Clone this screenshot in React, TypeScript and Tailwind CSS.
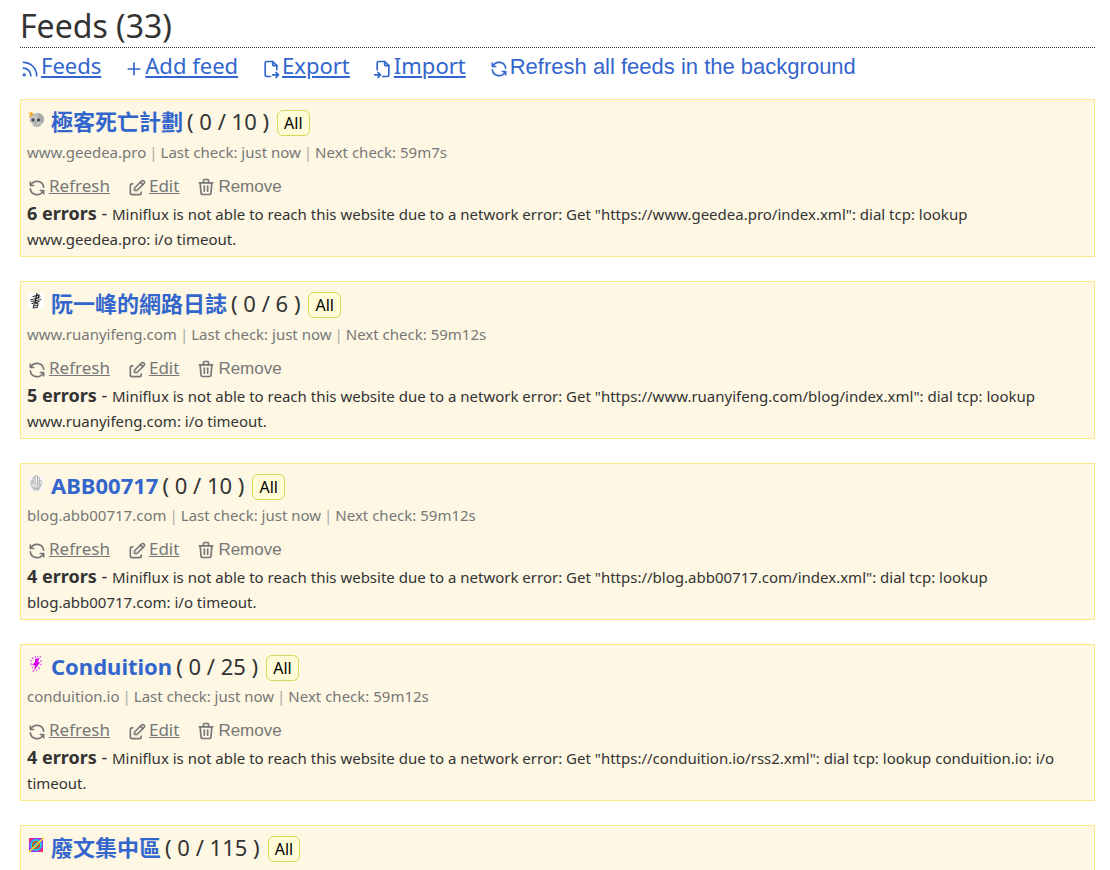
import type { ReactNode } from "react";
import {
  TbEdit,
  TbFileExport,
  TbFileImport,
  TbPlus,
  TbRefresh,
  TbRss,
  TbTrash,
} from "react-icons/tb";

interface Feed {
  title: string;
  unread: number;
  total: number;
  icon: ReactNode;
  check?: {
    host: string;
    next: string;
    errors: number;
    url: string;
  };
}

const SkullIcon = () => (
  <svg className="w-4 h-4" viewBox="0 0 16 16">
    <path
      d="M8.500 2C13 2 16 4.500 16 8.500c0 2.500-1.200 4-2.500 4.500l-.5 2-2.500 1H7.500L5 14.500 4.500 12.500C2.500 12 1.500 10.500 1.500 8.500 1.500 5 4 2 8.500 2z"
      fill="#c2c3c3"
    />
    <path d="M9.500 2C13.500 2 16 5 16 8.500c0 2.500-1.500 4-2.500 4.500l-3-4z" fill="#aaacad" />
    <circle cx="5" cy="9" r="1.700" fill="#4a4d52" />
    <circle cx="10.500" cy="9" r="1.700" fill="#4a4d52" />
    <path d="M7.700 10.500l-.8 1.500h1.500z" fill="#55585c" />
    <path d="M6 13v2M8.500 13.500v2M11 13v2" stroke="#808386" strokeWidth=".6" />
    <path d="M0 1l2 1 2-1.500.5 2L6.500 4l-2.500.5L1 6.500 2 3.500z" fill="#f5a623" />
  </svg>
);

const InkIcon = () => (
  <svg className="w-4 h-4" viewBox="0 0 16 16">
    <rect width="16" height="16" fill="#fff" />
    <g fill="none" stroke="#1c1c1c" strokeLinecap="round">
      <path d="M5 3.500l6-1.500-1 3.500" strokeWidth="1.100" />
      <path d="M2.500 7l9.500-3M3.500 8.500L13 6.500" strokeWidth=".9" />
      <path d="M9 .5L7 9.500M4 10.500l7-2" strokeWidth="1.200" />
      <path d="M6 11.500l-1 3.500 4.500-.5.500-4zM6 13l3.500-.7" strokeWidth=".9" />
    </g>
  </svg>
);

const HandIcon = () => (
  <svg className="w-4 h-4" viewBox="0 0 16 16">
    <rect width="16" height="16" fill="#f8f5f2" />
    <g fill="#efedeb" stroke="#8a8a8a" strokeWidth=".6">
      <path d="M3 7c0-2 2-2 2 0V3c0-1.500 1.500-1.500 2 0V1.500C7.500 0 9.500.2 9.500 1.500V3c0-1.300 2-1 2 .5V6c1-1.500 2.200-.8 2 .8L12.500 11l-2 4H6L3.500 11z" />
      <path d="M5 7v3M7 3v7M9.500 3v8M11.300 6v5M5 12h6.500M6 13.500h5" fill="none" />
    </g>
  </svg>
);

const BoltIcon = () => (
  <svg className="w-4 h-4" viewBox="0 0 16 16">
    <path d="M7 3l4.500-1-1.500 4 2 .5L6 14.500l1-5-3-.5L7 6z" fill="#d800f5" />
    <path
      d="M4 1.500l1.500 1.500M12.500 0l-.5 1.500M2 4.500l2 .5M13 4v2M3 7v2.500M12 8l1.500 1M4 11l1 1M10.500 11l1 2M5.500 14l-.5 2M8.500 13.500V15M7.500 0v2M10 0l-.5 1"
      stroke="#e552f2"
      strokeWidth="1.200"
    />
  </svg>
);

const MosaicIcon = () => (
  <svg className="w-4 h-4" viewBox="0 0 16 16">
    <rect x="1" y="1" width="14" height="14" fill="#a030f0" />
    <path d="M1 1h5L1 6zM15 15h-5l5-5z" fill="#f0287c" />
    <circle cx="8" cy="8" r="5" fill="#ef3a23" stroke="#16cbe8" strokeWidth="2" />
    <path d="M8 5l3 3-3 3-3-3z" fill="#4a6cf0" stroke="#26bd45" strokeWidth="1" />
    <path d="M1 15L16 .5" stroke="#ffdf20" strokeWidth="1.500" />
  </svg>
);

const feeds: Feed[] = [
  {
    title: "極客死亡計劃",
    unread: 0,
    total: 10,
    icon: <SkullIcon />,
    check: {
      host: "www.geedea.pro",
      next: "59m7s",
      errors: 6,
      url: "https://www.geedea.pro/index.xml",
    },
  },
  {
    title: "阮一峰的網路日誌",
    unread: 0,
    total: 6,
    icon: <InkIcon />,
    check: {
      host: "www.ruanyifeng.com",
      next: "59m12s",
      errors: 5,
      url: "https://www.ruanyifeng.com/blog/index.xml",
    },
  },
  {
    title: "ABB00717",
    unread: 0,
    total: 10,
    icon: <HandIcon />,
    check: {
      host: "blog.abb00717.com",
      next: "59m12s",
      errors: 4,
      url: "https://blog.abb00717.com/index.xml",
    },
  },
  {
    title: "Conduition",
    unread: 0,
    total: 25,
    icon: <BoltIcon />,
    check: {
      host: "conduition.io",
      next: "59m12s",
      errors: 4,
      url: "https://conduition.io/rss2.xml",
    },
  },
  {
    title: "廢文集中區",
    unread: 0,
    total: 115,
    icon: <MosaicIcon />,
  },
];

const menu = [
  { label: "Feeds", Icon: TbRss },
  { label: "Add feed", Icon: TbPlus },
  { label: "Export", Icon: TbFileExport },
  { label: "Import", Icon: TbFileImport },
];

function FeedCard({ feed }: { feed: Feed }) {
  const { title, unread, total, icon, check } = feed;
  // CJK titles need a slightly taller first line
  const isCjk = /[\u4e00-\u9fff]/.test(title);

  return (
    <article className="min-h-[156px] border border-[#f9e883] bg-[#fdf7e3] px-1.5 pt-1 pb-[5px]">
      <header
        className={`flex items-center ${isCjk ? "h-[34px]" : "h-[33px]"}`}
      >
        <span className="w-6 shrink-0 pl-px pb-1">{icon}</span>
        <h2 className="text-[22px] leading-8 font-bold">
          <a href="#feed" className="text-[#3366cc]">
            {title}
          </a>
        </h2>
        <span className="ml-1 text-[22px] leading-8">
          ( {unread} / {total} )
        </span>
        <a
          href="#category"
          className="ml-2 mt-1 rounded-md border border-[#d9d75a] bg-[#fffcd7] px-1.5 text-base leading-6 text-black"
        >
          All
        </a>
      </header>

      {check && (
        <>
          <ul className="mt-0.5 flex text-[15px] leading-6 text-[#777]">
            <li>{check.host}</li>
            <li>
              <span className="mx-[3px] text-[#aaa]">|</span>Last check: just
              now
            </li>
            <li>
              <span className="mx-[3px] text-[#aaa]">|</span>Next check:{" "}
              {check.next}
            </li>
          </ul>

          <ul className="mt-2.5 flex h-6 items-baseline gap-[17px] text-[17px] leading-6 text-[#777]">
            <li>
              <a href="#refresh">
                <TbRefresh className="mr-0.5 inline h-5 w-5 align-[-6px]" />
                <span className="underline">Refresh</span>
              </a>
            </li>
            <li>
              <a href="#edit">
                <TbEdit className="mr-0.5 inline h-5 w-5 align-[-6px]" />
                <span className="underline">Edit</span>
              </a>
            </li>
            <li>
              <button
                type="button"
                className="font-['Liberation_Sans',sans-serif]"
              >
                <TbTrash className="mr-0.5 inline h-5 w-5 align-[-5px]" />
                Remove
              </button>
            </li>
          </ul>

          <div className="mt-[3px] text-lg leading-[25px]">
            <strong>{check.errors} errors</strong> -{" "}
            <small className="text-[15px] leading-5">
              Miniflux is not able to reach this website due to a network
              error: Get "{check.url}": dial tcp: lookup {check.host}: i/o
              timeout.
            </small>
          </div>
        </>
      )}
    </article>
  );
}

export default function App() {
  return (
    <div className="bg-white pr-[15px] pl-5 font-['Noto_Sans','Noto_Sans_CJK_TC',sans-serif] text-[#333]">
      <header>
        <h1 className="border-b border-dotted border-[#333] pt-1 text-[32px] leading-[43px]">
          Feeds (33)
        </h1>
        <nav>
          <ul className="flex h-9 items-baseline gap-[23px] text-[22px] leading-[34px] text-[#3366cc]">
            {menu.map(({ label, Icon }) => (
              <li key={label}>
                <a href={`#${label}`}>
                  <Icon className="mr-px inline h-5 w-5 align-[-5px]" />
                  <span className="underline">{label}</span>
                </a>
              </li>
            ))}
            <li>
              <button
                type="button"
                className="font-['Liberation_Sans',sans-serif]"
              >
                <TbRefresh className="mr-px inline h-5 w-5 align-[-5px]" />
                Refresh all feeds in the background
              </button>
            </li>
          </ul>
        </nav>
      </header>

      <main className="mt-[15px] flex flex-col gap-6">
        {feeds.map((feed) => (
          <FeedCard key={feed.title} feed={feed} />
        ))}
      </main>
    </div>
  );
}
